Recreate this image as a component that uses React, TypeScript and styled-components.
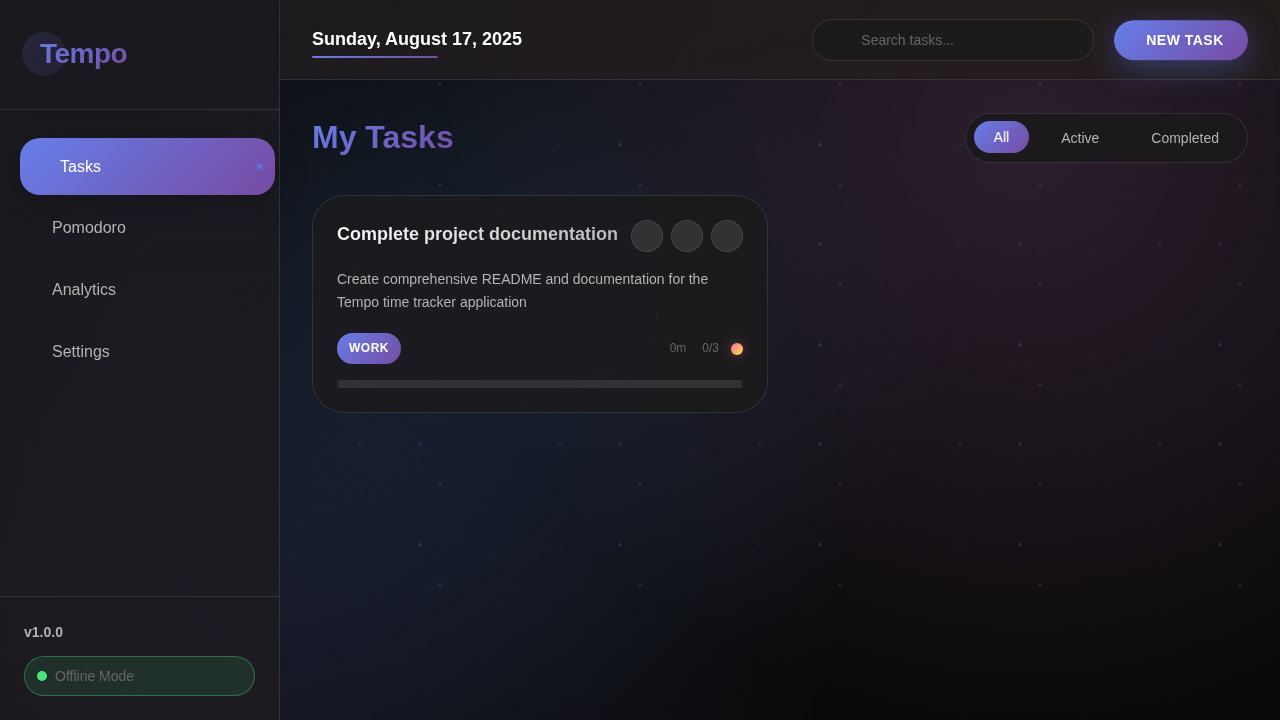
import React, { useState } from "react";
import styled, { createGlobalStyle, css } from "styled-components";

const primary = "linear-gradient(135deg, #667eea 0%, #764ba2 100%)";
const line = "rgba(255, 255, 255, 0.1)";

const GlobalStyle = createGlobalStyle`
  *, *::before, *::after { box-sizing: border-box; margin: 0; padding: 0; }
  body {
    font-family: "Liberation Sans", Arial, sans-serif;
    font-size: 16px;
    line-height: 1.6;
    color: #fff;
    background: #0a0a0a;
    overflow: hidden;
  }
  button, input { font-family: inherit; }
`;

const Shell = styled.div`
  position: relative;
  display: grid;
  grid-template-columns: 280px 1fr;
  height: 100vh;
  overflow: hidden;
  background:
    radial-gradient(circle at 20% 80%, rgba(102, 126, 234, 0.15) 0%, transparent 50%),
    radial-gradient(circle at 80% 20%, rgba(240, 147, 251, 0.15) 0%, transparent 50%),
    radial-gradient(circle at 40% 40%, rgba(79, 172, 254, 0.1) 0%, transparent 50%),
    #0a0a0a;
`;

const Particles = styled.div`
  position: absolute;
  inset: 0;
  transform: translateY(-85.6px);
  will-change: transform;
  pointer-events: none;
  opacity: 0.6;
  background-image:
    radial-gradient(2px 2px at 20px 30px, rgba(102, 126, 234, 0.75), transparent),
    radial-gradient(2px 2px at 40px 70px, rgba(240, 147, 251, 0.42), transparent),
    radial-gradient(1px 1px at 90px 40px, rgba(79, 172, 254, 0.5), transparent),
    radial-gradient(1px 1px at 130px 80px, rgba(67, 233, 123, 0.4), transparent),
    radial-gradient(2px 2px at 160px 30px, rgba(118, 100, 220, 0.5), transparent);
  background-size: 200px 100px;
`;

const Sidebar = styled.aside`
  position: relative;
  display: flex;
  flex-direction: column;
  border-right: 1px solid ${line};
  background: linear-gradient(180deg, rgba(27, 27, 32, 0.9), rgba(30, 28, 34, 0.9));
  backdrop-filter: blur(20px);
`;

const Brand = styled.div`
  padding: 32px 40px;
  border-bottom: 1px solid ${line};
`;

const Logo = styled.h1`
  position: relative;
  width: fit-content;
  font-size: 28px;
  font-weight: 700;
  letter-spacing: -0.5px;
  background: ${primary};
  background-clip: text;
  color: transparent;

  &::before {
    content: "";
    position: absolute;
    left: -18px;
    top: 0;
    width: 44px;
    height: 44px;
    border-radius: 50%;
    background: ${primary};
    opacity: 0.14;
  }
`;

const Nav = styled.nav`
  flex: 1;
  display: flex;
  flex-direction: column;
  gap: 4px;
  padding: 28px 12px;
`;

const NavItem = styled.a<{ $active?: boolean }>`
  position: relative;
  padding: 16px 40px;
  border-radius: 20px;
  color: #b3b3b3;
  cursor: pointer;
  ${(p) =>
    p.$active &&
    css`
      color: #fff;
      background: ${primary};
      transform: translateX(8px);
      box-shadow: 0 8px 32px rgba(0, 0, 0, 0.22);

      &::after {
        content: "";
        position: absolute;
        right: 12px;
        top: 50%;
        width: 6px;
        height: 6px;
        border-radius: 50%;
        transform: translateY(-50%);
        background: linear-gradient(135deg, #5f7fe6 0%, #7056b4 100%);
        box-shadow: 0 0 12px rgba(102, 126, 234, 0.4);
      }
    `}
`;

const SideFooter = styled.footer`
  padding: 24px;
  border-top: 1px solid ${line};
  font-size: 14px;
`;

const Version = styled.div`
  font-weight: 600;
  color: #b3b3b3;
  margin-bottom: 12px;
`;

const Status = styled.div`
  display: flex;
  align-items: center;
  gap: 8px;
  padding: 8px 12px;
  border: 1px solid rgba(67, 233, 123, 0.35);
  border-radius: 20px;
  color: #666;
  background: rgba(67, 233, 123, 0.1);

  &::before {
    content: "";
    width: 10px;
    height: 10px;
    border-radius: 50%;
    background: #43e97b;
  }
`;

const Main = styled.main`
  position: relative;
  display: flex;
  flex-direction: column;
  min-width: 0;
`;

const TopBar = styled.header`
  display: flex;
  align-items: center;
  height: 80px;
  padding: 0 32px;
  border-bottom: 1px solid ${line};
  background: linear-gradient(
    90deg,
    rgba(32, 29, 32, 0.88),
    rgba(34, 29, 30, 0.88) 60%,
    rgba(35, 29, 27, 0.88)
  );
  backdrop-filter: blur(20px);
`;

const DateLabel = styled.div`
  position: relative;
  margin-right: auto;
  font-size: 18px;
  font-weight: 600;

  &::after {
    content: "";
    position: absolute;
    left: 0;
    bottom: -4px;
    width: 60%;
    height: 2px;
    border-radius: 1px;
    background: ${primary};
  }
`;

const Search = styled.input`
  width: 282px;
  height: 42px;
  padding: 0 20px 0 48.3px;
  margin-right: 20px;
  border: 1px solid ${line};
  border-radius: 20px;
  outline: none;
  font-size: 14px;
  color: #fff;
  background: #1c1b1b;

  &::placeholder { color: #666; }
`;

const NewTask = styled.button`
  width: 134px;
  height: 40px;
  padding: 0 24px 0 32px;
  border: 0;
  border-radius: 20px;
  font-size: 14px;
  font-weight: 600;
  letter-spacing: 0.5px;
  text-transform: uppercase;
  white-space: nowrap;
  color: #fff;
  background: ${primary};
  transform: translateY(0.2px);
  will-change: transform;
  box-shadow: 0 8px 32px rgba(102, 126, 234, 0.4), 0 8px 32px rgba(0, 0, 0, 0.2);
`;

const Content = styled.section`
  padding: 33px 32px;
`;

const PageHead = styled.div`
  display: flex;
  align-items: center;
  justify-content: space-between;
  height: 50px;
  margin-bottom: 32px;
`;

const PageTitle = styled.h2`
  font-size: 32px;
  font-weight: 700;
  line-height: 51px;
  margin-bottom: 2px;
  background: ${primary};
  background-clip: text;
  color: transparent;
`;

const Filters = styled.div`
  display: flex;
  gap: 12px;
  padding: 8px;
  border: 1px solid ${line};
  border-radius: 25px;
  background: rgba(27, 26, 27, 0.9);
`;

const FilterButton = styled.button<{ $active?: boolean }>`
  height: 32px;
  padding: 0 20px;
  border: 0;
  border-radius: 16px;
  font-size: 14px;
  cursor: pointer;
  color: ${(p) => (p.$active ? "#fff" : "#b3b3b3")};
  background: ${(p) => (p.$active ? primary : "transparent")};
  transform: ${(p) => (p.$active ? "translateY(-1px)" : "none")};
`;

const Card = styled.article`
  width: 456px;
  padding: 24px;
  border: 1px solid ${line};
  border-radius: 32px;
  background: linear-gradient(90deg, rgba(27, 27, 30, 0.9), rgba(27, 27, 28, 0.9));
  backdrop-filter: blur(20px);
`;

const CardHead = styled.div`
  display: flex;
  justify-content: space-between;
  height: 32px;
  margin-bottom: 16px;
`;

const CardTitle = styled.h3`
  flex: 1;
  font-size: 18px;
  font-weight: 600;
  white-space: nowrap;
  background: linear-gradient(135deg, #fff 0%, #b3b3b3 100%);
  background-clip: text;
  color: transparent;
`;

const Actions = styled.div`
  display: flex;
  gap: 8px;
`;

const RoundButton = styled.button`
  width: 32px;
  height: 32px;
  border: 1px solid ${line};
  border-radius: 50%;
  background: rgba(255, 255, 255, 0.1);
`;

const Description = styled.p`
  margin-bottom: 19px;
  font-size: 14px;
  line-height: 22.8px;
  color: #b3b3b3;
`;

const CardMeta = styled.div`
  display: flex;
  align-items: center;
  margin-bottom: 16px;
  font-size: 12px;
  color: #666;
`;

const Badge = styled.span`
  margin-right: auto;
  padding: 6px 12px;
  border-radius: 16px;
  font-weight: 600;
  letter-spacing: 0.5px;
  text-transform: uppercase;
  color: #fff;
  background: ${primary};
`;

const Stat = styled.span`
  margin-left: 16px;
`;

const Priority = styled.span`
  width: 12px;
  height: 12px;
  margin: 1px 0 0 12px;
  border-radius: 50%;
  background: linear-gradient(135deg, #fa709a 0%, #fee140 100%);
  box-shadow: 0 0 12px rgba(250, 112, 154, 0.4);
`;

const Progress = styled.div`
  height: 8px;
  border-radius: 4px;
  background: rgba(255, 255, 255, 0.1);
`;

const pages = ["Tasks", "Pomodoro", "Analytics", "Settings"];
const filters = ["All", "Active", "Completed"];

export default function App() {
  const [page, setPage] = useState("Tasks");
  const [filter, setFilter] = useState("All");

  return (
    <>
      <GlobalStyle />
      <Shell>
        <Particles />
        <Sidebar>
          <Brand>
            <Logo>Tempo</Logo>
          </Brand>
          <Nav>
            {pages.map((p) => (
              <NavItem key={p} $active={p === page} onClick={() => setPage(p)}>
                {p}
              </NavItem>
            ))}
          </Nav>
          <SideFooter>
            <Version>v1.0.0</Version>
            <Status>Offline Mode</Status>
          </SideFooter>
        </Sidebar>
        <Main>
          <TopBar>
            <DateLabel>Sunday, August 17, 2025</DateLabel>
            <Search placeholder="Search tasks..." />
            <NewTask>New Task</NewTask>
          </TopBar>
          <Content>
            <PageHead>
              <PageTitle>My Tasks</PageTitle>
              <Filters>
                {filters.map((f) => (
                  <FilterButton key={f} $active={f === filter} onClick={() => setFilter(f)}>
                    {f}
                  </FilterButton>
                ))}
              </Filters>
            </PageHead>
            <Card>
              <CardHead>
                <CardTitle>Complete project documentation</CardTitle>
                <Actions>
                  <RoundButton aria-label="Start" />
                  <RoundButton aria-label="Edit" />
                  <RoundButton aria-label="Delete" />
                </Actions>
              </CardHead>
              <Description>
                Create comprehensive README and documentation for the Tempo time tracker application
              </Description>
              <CardMeta>
                <Badge>Work</Badge>
                <Stat>0m</Stat>
                <Stat>0/3</Stat>
                <Priority />
              </CardMeta>
              <Progress />
            </Card>
          </Content>
        </Main>
      </Shell>
    </>
  );
}
